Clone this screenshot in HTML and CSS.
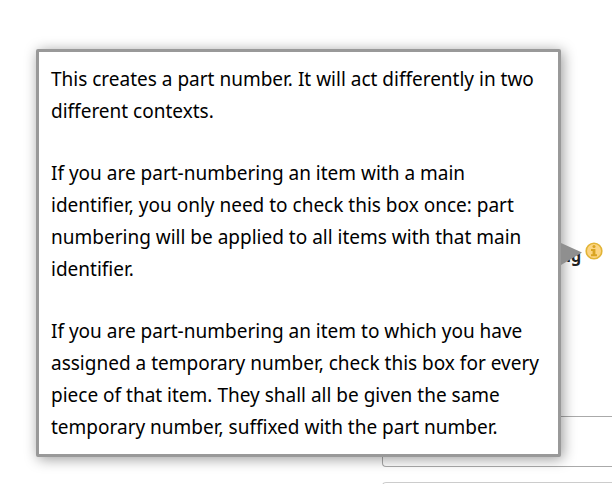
FILE: index.html
```html
<!DOCTYPE html>
<html lang="en">
<head>
<meta charset="utf-8">
<title>Part numbering</title>
<link rel="stylesheet" href="styles.css">
</head>
<body>
<main class="form">
  <div class="label-row">
    <span class="label">ng</span>
    <button class="info" type="button" aria-label="Help" aria-describedby="tip">
      <svg width="18" height="18" viewBox="0 0 18 18" aria-hidden="true">
        <circle cx="9" cy="9" r="7.8" fill="#fcd583" stroke="#e2b436" stroke-width="1.6"/>
        <circle cx="9" cy="4.6" r="1.5" fill="#d9a422"/>
        <path d="M6 7h4.4v5.3h1.6v1.9H6v-1.9h1.6V8.9H6z" fill="#d9a422"/>
      </svg>
    </button>
  </div>
  <input class="field" type="text" aria-label="Main identifier">
  <input class="field field-light" type="text" aria-label="Temporary number">
</main>
<div class="tooltip" id="tip" role="tooltip">
  <p>This creates a part number. It will act differently in two<br>different contexts.</p>
  <p>If you are part-numbering an item with a main<br>identifier, you only need to check this box once: part<br>numbering will be applied to all items with that main<br>identifier.</p>
  <p>If you are part-numbering an item to which you have<br>assigned a temporary number, check this box for every<br>piece of that item. They shall all be given the same<br>temporary number, suffixed with the part number.</p>
  <svg class="arrow" width="22" height="22" viewBox="0 0 22 22" aria-hidden="true"><path d="M0 0L21 9.5L0 22z" fill="#8f8f8f"/></svg>
</div>
</body>
</html>
```
FILE: styles.css
```css
* {
  box-sizing: border-box;
}

body {
  margin: 0;
  background: #fff;
  color: #000;
  font-family: "Noto Sans", "Liberation Sans", sans-serif;
}

.form {
  display: flex;
  flex-direction: column;
  gap: 15px;
  height: 100vh;
  padding-top: 240px;
  padding-left: 382px;
  overflow: hidden;
}

.label-row {
  display: flex;
  flex-shrink: 0;
  justify-content: flex-end;
  align-items: flex-start;
  gap: 4px;
  height: 161px;
  padding-right: 9px;
}

.label {
  padding-top: 6px;
  color: #222;
  font-size: 16px;
  font-weight: 700;
  line-height: 20px;
}

.info {
  display: flex;
  margin-top: 2px;
  padding: 0;
  border: 0;
  background: none;
}

.field {
  flex-shrink: 0;
  width: 100%;
  height: 51px;
  padding: 0 12px;
  border: 1px solid #aaa;
  border-right: 0;
  border-radius: 4px 0 0 4px;
  background: #fff;
}

.field-light {
  border-color: #ccc;
}

.tooltip {
  position: absolute;
  top: 49px;
  left: 36px;
  right: 51px;
  display: flex;
  flex-direction: column;
  gap: 30px;
  padding: 11px 12px;
  border: 3px solid #999;
  border-radius: 2px;
  background: #fff;
  box-shadow: 2px 2px 14px rgba(0, 0, 0, 0.4);
  font-size: 19px;
  line-height: 32px;
  white-space: nowrap;
}

.tooltip p {
  margin: 0;
}

.arrow {
  position: absolute;
  top: 191px;
  left: 100%;
  margin-left: 3px;
}
```
